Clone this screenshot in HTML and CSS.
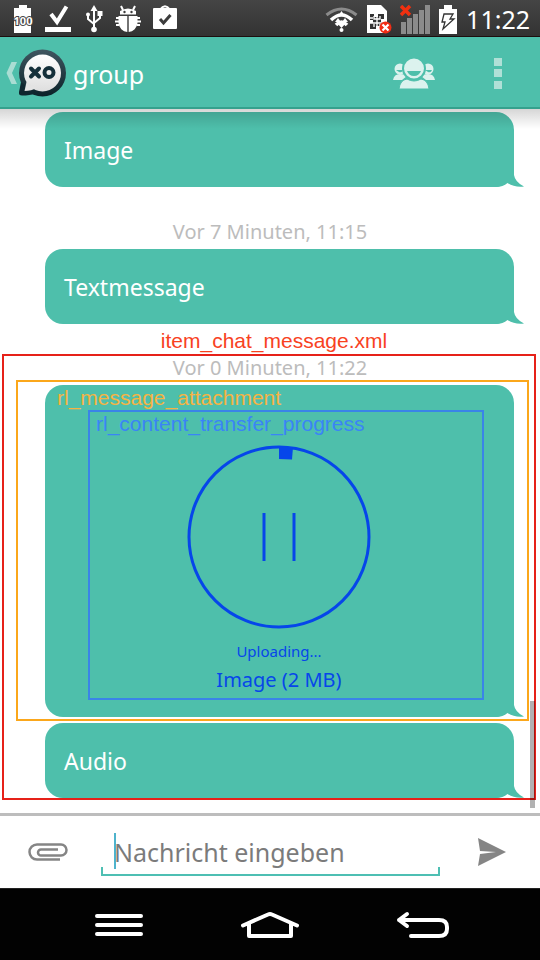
FILE: index.html
```html
<!DOCTYPE html>
<html lang="de">
<head>
<meta charset="utf-8">
<meta name="viewport" content="width=device-width, initial-scale=1">
<title>group</title>
<link rel="stylesheet" href="styles.css">
</head>
<body>
<div class="statusbar">
  <div class="status-group">
    <svg width="20" height="28" viewBox="0 0 20 28"><path d="M6 0h8v3h4v25H1V3h5z" fill="#fff"/><text x="10" y="20" class="battery-level">100</text></svg>
    <svg width="26" height="28" viewBox="0 0 26 28"><path d="M0 22h26v5H0z" fill="#fff"/><path d="M6 9l6 8L21.500 1.500" fill="none" stroke="#fff" stroke-width="4"/></svg>
    <svg width="20" height="28" viewBox="-2 0 20 28"><g fill="none" stroke="#fff" stroke-width="2"><path d="M9 4v20M3 10v4l6 5M15 8v5l-6 5"/></g><g fill="#fff"><path d="M9 0l3.500 6h-7z"/><circle cx="3" cy="9.500" r="2"/><path d="M12.500 6h5v5h-5z"/><circle cx="9" cy="24.500" r="2.800"/></g></svg>
    <svg width="26" height="28" viewBox="0 0 26 28"><g fill="#fff"><path d="M5 9.500V6q8-5 16 0v3.500z"/><path d="M3.500 11h8.800v16A9.500 10 0 0 1 3.500 18zM13.700 11h8.800v7a9.500 10 0 0 1-8.800 9z"/></g><path d="M8 5L6 1M18 5l2-4M4 13H1M4 16.500H0M4 20H1M22 13h3M22 16.500h4M22 20h3" stroke="#fff" stroke-width="2"/><circle cx="9.500" cy="7" r="1.200" fill="#3c3c3c"/><circle cx="16.500" cy="7" r="1.200" fill="#3c3c3c"/></svg>
    <svg width="24" height="28" viewBox="0 0 24 28"><rect y="3" width="24" height="21" rx="1" fill="#fff"/><path d="M7 5V4.500q5-6.500 10 0V5" fill="none" stroke="#fff" stroke-width="2"/><path d="M7 14l3.500 4 7-8" fill="none" stroke="#3c3c3c" stroke-width="3"/></svg>
  </div>
  <div class="status-group status-right">
    <svg width="33" height="28" viewBox="0 0 33 28"><path d="M1.500 10q15-12 30 0" fill="none" stroke="#8b8b8b" stroke-width="3"/><path d="M6 15q10.500-10 21 0M11 20q5.500-6 11 0" fill="none" stroke="#fff" stroke-width="3.500"/><path d="M10 17l3-4 3 4zM17 17l3-4 3 4zM13 11l3.500-5 3.500 5zM12 18h9l-4.500 5z" fill="#fff"/><circle cx="16.500" cy="25" r="2" fill="#fff"/></svg>
    <svg width="26" height="29" viewBox="0 0 26 29"><path d="M1 0h14l6 6v22H1z" fill="#fff"/><path d="M4 9h4v3h4V9h6v5h-3v3h3v7h-4v-3h-4v3H4v-6h3v-3H4z" fill="#333"/><path d="M3 13h4M3 18h16M8 11v3h6v-3M8 22v-3M14 22v-3M11 9v15" stroke="#fff" stroke-width="1.300" fill="none"/><circle cx="19.500" cy="22.500" r="6" fill="#f22d15"/><path d="M16.500 19.500l6 6m0-6l-6 6" stroke="#fff" stroke-width="2.200"/></svg>
    <svg width="30" height="29" viewBox="0 0 30 29"><path d="M1 17h5v12H1zM7 13h5v16H7zM13 9h5v20h-5zM19 5h5v24h-5zM25 0h5v29h-5z" fill="#8b8b8b"/><path d="M1 1l9 9M10 1l-9 9" stroke="#f03010" stroke-width="3.500"/></svg>
    <svg width="20" height="29" viewBox="0 0 20 29"><path d="M6 0h8v4h5v25H1V4h5z" fill="#fff"/><path d="M6 9h9l-3 5h4L5 24l2-7H4z" fill="#fff" stroke="#333" stroke-width="1.300"/></svg>
    <span class="clock">11:22</span>
  </div>
</div>
<header class="appbar">
  <button class="back" aria-label="Zurück">
    <svg width="12" height="24" viewBox="0 0 12 24"><path d="M5.500 1H11L6 12l5 11H5.500L.500 12z" fill="#a9ddd3"/></svg>
    <svg width="50" height="50" viewBox="0 0 50 50"><defs><linearGradient id="ring" x2="0" y2="1"><stop stop-color="#3f5660"/><stop offset="1" stop-color="#0b2229"/></linearGradient><linearGradient id="face" x2="0" y2="1"><stop stop-color="#fff"/><stop offset="1" stop-color="#dedede"/></linearGradient></defs><circle cx="24.500" cy="25" r="23.500" fill="url(#ring)"/><path d="M3 34l-2 10q-.500 3.500 3 3.500 8 0 13-2z" fill="#0f272f"/><circle cx="24.500" cy="25" r="18.500" fill="url(#face)"/><path d="M8.500 34l-2 9q7 0 12-3z" fill="#e3e3e3"/><path d="M13 20.500l8 8m0-8l-8 8" stroke="#15303a" stroke-width="4" stroke-linecap="round"/><circle cx="31" cy="24.500" r="4.500" fill="none" stroke="#15303a" stroke-width="4"/></svg>
  </button>
  <h1 class="title">group</h1>
  <button class="action people" aria-label="Mitglieder">
    <svg width="44" height="32" viewBox="0 0 44 32"><g fill="#dcf2ee"><circle cx="8" cy="12" r="5.500"/><circle cx="36" cy="12" r="5.500"/><path d="M1 23q1-6 7-6 5 0 7 2l-5 4zM43 23q-1-6-7-6-5 0-7 2l5 4z"/><circle cx="22" cy="11.500" r="11" stroke="#4ebfab" stroke-width="2"/><path d="M7 32q1-9 8-10 7 4 14 0 7 1 8 10z" stroke="#4ebfab"/></g><path d="M15 14h14q-2 5-7 5t-7-5zM4 13h7q-1 3-4 2zM33 13h7q-1 3-4 2z" fill="#4ebfab"/></svg>
  </button>
  <button class="action more" aria-label="Mehr">
    <svg width="8" height="31" viewBox="0 0 8 31"><path d="M0 0h8v8H0zM0 11h8v8H0zM0 23h8v8H0z" fill="#b0e0d7"/></svg>
  </button>
</header>
<main class="chat">
  <article class="bubble">Image<svg class="tail" width="30" height="20" viewBox="0 0 30 20"><path d="M20 0v8q1 7 10 11.500-10 1-16.500-3.500Q9 20 2 20H0V0z"/></svg></article>
  <p class="stamp stamp-gap">Vor 7 Minuten, 11:15</p>
  <article class="bubble">Textmessage<svg class="tail" width="30" height="20" viewBox="0 0 30 20"><path d="M20 0v8q1 7 10 11.500-10 1-16.500-3.500Q9 20 2 20H0V0z"/></svg></article>
  <p class="note note-item">item_chat_message.xml</p>
  <section class="frame frame-item">
    <p class="stamp">Vor 0 Minuten, 11:22</p>
    <section class="frame frame-attachment">
      <article class="bubble bubble-transfer">
        <p class="note note-attachment">rl_message_attachment</p>
        <div class="frame frame-progress">
          <p class="note note-progress">rl_content_transfer_progress</p>
          <div class="transfer">
            <button class="pause" aria-label="Pause"><svg width="184" height="184" viewBox="0 0 184 184"><circle cx="92" cy="92" r="90" fill="none" stroke="#0646ea" stroke-width="3"/><path d="M92 2h14l-1 12.500-13-.500z" fill="#0646ea"/><path d="M77 68v48M107 68v48" stroke="#0646ea" stroke-width="3"/></svg></button>
            <p class="state">Uploading...</p>
            <p class="file">Image (2 MB)</p>
          </div>
        </div>
        <svg class="tail" width="30" height="20" viewBox="0 0 30 20"><path d="M20 0v8q1 7 10 11.500-10 1-16.500-3.500Q9 20 2 20H0V0z"/></svg>
      </article>
    </section>
    <article class="bubble">Audio<svg class="tail" width="30" height="20" viewBox="0 0 30 20"><path d="M20 0v8q1 7 10 11.500-10 1-16.500-3.500Q9 20 2 20H0V0z"/></svg></article>
  </section>
  <div class="scroll-thumb"></div>
</main>
<form class="composer">
  <button type="button" class="tool" aria-label="Anhang"><svg width="40" height="18" viewBox="0 0 40 18"><path d="M32 16.500H9A7.500 7.500 0 0 1 9 1.500h24a5.500 5.500 0 0 1 0 11H13a3 3 0 0 1 0-6h17" fill="none" stroke="#858585" stroke-width="2.500"/></svg></button>
  <div class="field"><input type="text" aria-label="Nachricht" placeholder="Nachricht eingeben"></div>
  <button class="tool send" aria-label="Senden"><svg width="28" height="28" viewBox="0 0 28 28"><path d="M0 0l28 14L0 28l2-12 16-2-16-1z" fill="#858585"/></svg></button>
</form>
<nav class="navbar">
  <button aria-label="Menü"><svg width="48" height="24" viewBox="0 0 48 24"><path d="M2 3h44M2 12h44M2 21h44"/></svg></button>
  <button aria-label="Startseite"><svg width="58" height="28" viewBox="0 0 58 28"><path d="M2 14.500L27 3.500q2-1 4 0l25 11M8 12v13h42V12"/></svg></button>
  <button aria-label="Zurück"><svg width="54" height="28" viewBox="0 0 54 28"><path d="M3 9h40q8 0 8 7v2q0 7-8 7H15M11 3L3 9l8 6"/></svg></button>
</nav>
</body>
</html>
```
FILE: styles.css
```css
* { box-sizing: border-box; }
body {
  margin: 0;
  min-height: 100vh;
  display: flex;
  flex-direction: column;
  background: #fff;
  font-family: "Noto Sans", sans-serif;
}
p, h1 { margin: 0; font-weight: 400; }
button { padding: 0; border: 0; background: none; display: flex; align-items: center; justify-content: center; }
svg { display: block; flex: none; }

.statusbar {
  display: flex;
  justify-content: space-between;
  align-items: center;
  height: 37px;
  padding: 2px 10px 0 13px;
  background: linear-gradient(#454545, #333);
  border-bottom: 1px solid #1d0f0f;
}
.status-group { display: flex; align-items: center; gap: 12px; }
.status-right { gap: 8px; }
.battery-level { font: 700 11px "Noto Sans", sans-serif; text-anchor: middle; fill: #fff; stroke: #444; stroke-width: 2px; paint-order: stroke; }
.clock { color: #fff; font-size: 25px; line-height: 34px; }

.appbar {
  display: flex;
  align-items: center;
  height: 72px;
  padding: 2px 38px 0 6px;
  background: #4ebfab;
  border-bottom: 2px solid #35a18d;
}
.title { flex: 1; padding: 2px 0 0 5px; color: #fff; font-size: 25px; line-height: 34px; }
.action + .action { margin-left: 58px; }

.chat {
  position: relative;
  flex: 1;
  padding-top: 3px;
}
.chat::before {
  content: "";
  position: absolute;
  inset: 0 0 auto;
  height: 20px;
  z-index: 1;
  background: linear-gradient(rgba(0, 0, 0, .16), rgba(0, 0, 0, 0));
}
.bubble {
  position: relative;
  margin: 0 26px 0 45px;
  padding: 23px 19px 22px;
  border-radius: 18px 18px 20px 18px;
  background: #4ebfab;
  color: #fff;
  font-size: 23px;
  line-height: 30px;
}
.tail { position: absolute; right: -10px; bottom: 0; fill: #4ebfab; }
.stamp { color: #bcbcbc; font-size: 20px; line-height: 24px; text-align: center; }
.stamp-gap { padding: 33px 0 5px; }
.note { font-family: "Liberation Sans", sans-serif; font-size: 21px; line-height: 24px; }
.note-item { padding: 5px 0 1px 8px; color: #f8421f; text-align: center; }
.note-attachment { padding-left: 12px; color: #f6b344; }
.note-progress { padding-left: 6px; color: #3a84f7; }

.frame { border: 2px solid; }
.frame-item { margin: 0 4px 0 2px; border-color: #e62119; }
.frame-item .stamp { padding-left: 2px; }
.frame-item .bubble { margin: 2px 20px 0 41px; }
.frame-attachment { margin: 0 5px 0 12px; border-color: #fba71b; padding: 3px 0 2px; }
.frame-attachment .bubble-transfer { margin: 0 13px 0 27px; padding: 1px 0 17px; }
.frame-progress { margin: 0 30px 0 43px; border-color: #3a84e8; }
.transfer {
  display: flex;
  flex-direction: column;
  align-items: center;
  padding: 9px 14px 4px 0;
  color: #0646ea;
}
.state { padding-top: 11px; font-size: 15px; line-height: 22px; }
.file { padding-top: 4px; font-size: 20px; line-height: 28px; }
.scroll-thumb { position: absolute; right: 5px; bottom: 5px; width: 5px; height: 107px; background: rgba(0, 0, 0, .3); }

.composer {
  display: flex;
  align-items: center;
  height: 75px;
  padding: 0 34px 0 28px;
  border-top: 3px solid #bdbdbd;
}
.field { position: relative; flex: 1; margin: 0 38px 0 33px; }
.field::before { content: ""; position: absolute; left: 13px; top: 5px; width: 2px; height: 36px; background: #4eb3cc; }
.field::after {
  content: "";
  position: absolute;
  inset: auto 0 0;
  height: 7px;
  border: 2px solid #4ebfb3;
  border-top: 0;
  pointer-events: none;
}
.field input {
  display: block;
  width: 100%;
  height: 48px;
  padding: 0 13px;
  border: 0;
  outline: 0;
  background: none;
  font: 25px "Noto Sans", sans-serif;
}
.field input::placeholder { color: #7b7b7b; opacity: 1; }

.navbar {
  display: flex;
  justify-content: space-between;
  height: 72px;
  padding: 0 90px 0 95px;
  background: #020202;
  border-top: 1px solid #222;
}
.navbar svg { fill: none; stroke: #fff; stroke-width: 4px; stroke-linecap: round; stroke-linejoin: round; }
```
